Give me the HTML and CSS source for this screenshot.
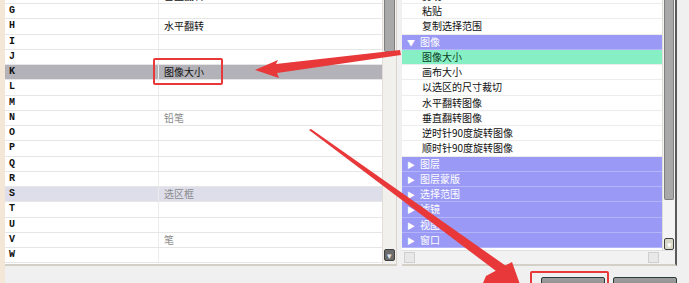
FILE: index.html
```html
<!DOCTYPE html>
<html lang="zh-CN">
<head>
  <meta charset="UTF-8" />
  <title>快捷键设置</title>
  <link rel="stylesheet" href="styles.css">
</head>
<body>
  <div class="dialog">
    <div class="panes">

      <!-- 左侧：按键列表 -->
      <div class="pane keys">
        <div class="list">
          <div class="row top"><span class="key">F</span><span class="val">垂直翻转</span></div>
          <div class="row"><span class="key">G</span><span class="val"></span></div>
          <div class="row"><span class="key">H</span><span class="val">水平翻转</span></div>
          <div class="row"><span class="key">I</span><span class="val"></span></div>
          <div class="row"><span class="key">J</span><span class="val"></span></div>
          <div class="row picked"><span class="key">K</span><span class="val">图像大小</span></div>
          <div class="row"><span class="key">L</span><span class="val"></span></div>
          <div class="row"><span class="key">M</span><span class="val"></span></div>
          <div class="row"><span class="key">N</span><span class="val dim">铅笔</span></div>
          <div class="row"><span class="key">O</span><span class="val"></span></div>
          <div class="row"><span class="key">P</span><span class="val"></span></div>
          <div class="row"><span class="key">Q</span><span class="val"></span></div>
          <div class="row"><span class="key">R</span><span class="val"></span></div>
          <div class="row soft"><span class="key">S</span><span class="val dim">选区框</span></div>
          <div class="row"><span class="key">T</span><span class="val"></span></div>
          <div class="row"><span class="key">U</span><span class="val"></span></div>
          <div class="row"><span class="key">V</span><span class="val dim">笔</span></div>
          <div class="row"><span class="key">W</span><span class="val"></span></div>
        </div>
        <div class="vscroll">
          <div class="thumb short"></div>
          <div class="spacer"></div>
          <div class="btn-down dark">▾</div>
        </div>
      </div>

      <!-- 右侧：命令树 -->
      <div class="pane tree">
        <div class="tree-body">
          <div class="list">
            <div class="item top">剪切</div>
            <div class="item">粘贴</div>
            <div class="item">复制选择范围</div>
            <div class="group"><span class="tri">▼</span>图像</div>
            <div class="item chosen">图像大小</div>
            <div class="item">画布大小</div>
            <div class="item">以选区的尺寸裁切</div>
            <div class="item">水平翻转图像</div>
            <div class="item">垂直翻转图像</div>
            <div class="item">逆时针90度旋转图像</div>
            <div class="item">顺时针90度旋转图像</div>
            <div class="group"><span class="tri">▶</span>图层</div>
            <div class="group"><span class="tri">▶</span>图层蒙版</div>
            <div class="group"><span class="tri">▶</span>选择范围</div>
            <div class="group"><span class="tri">▶</span>滤镜</div>
            <div class="group"><span class="tri">▶</span>视图</div>
            <div class="group"><span class="tri">▶</span>窗口</div>
          </div>
          <div class="vscroll">
            <div class="thumb long"></div>
            <div class="spacer"></div>
            <div class="btn-down light">▾</div>
          </div>
        </div>
        <div class="hscroll">
          <div class="hbtn"></div>
          <div class="spacer"></div>
          <div class="hbtn"></div>
        </div>
      </div>
    </div>

    <div class="actions">
      <button class="ok">确定</button>
      <button>取消</button>
    </div>

    <!-- 标注 -->
    <div class="callout callout-k"></div>
    <div class="callout callout-ok"></div>
    <svg class="marks" width="689" height="283" viewBox="0 0 689 283">
      <polygon points="400,50 276,64 278,60 255,70 279,78 277,73 401,55" fill="#e8383a"/>
      <polygon points="309,130 311,129 506,266 500,274" fill="#e8383a"/>
      <polygon points="486,276 512,262 522,290 480,290" fill="#e8383a"/>
    </svg>
  </div>
</body>
</html>
```

FILE: styles.css
```css
:root {
  --row-h: 15.25px;
  --line: #e6e6e6;
  --purple: #9a9af6;
  --green: #86f0c4;
  --red: #e8383a;
}

* {
  box-sizing: border-box;
}

body {
  margin: 0;
  background: #f0f0f0;
  font-family: "Noto Sans CJK SC", "Liberation Sans", sans-serif;
  font-size: 10px;
  color: #111;
  overflow: hidden;
}

.dialog {
  position: relative;
  width: 689px;
  height: 283px;
  overflow: hidden;
  border-left: 5px solid #f4e7d8;
}

.panes {
  display: flex;
  gap: 5px;
  height: 266px;
}

.pane {
  background: #fff;
  overflow: hidden;
  border-bottom: 2px solid #d4d0c8;
}

/* 左侧 */
.keys {
  width: 392px;
  display: flex;
  border-right: 1px solid #d8d4cc;
}

.list {
  flex: 1;
  overflow: hidden;
}

.row {
  display: flex;
  height: var(--row-h);
  border-bottom: 1px solid var(--line);
  line-height: 14px;
}

.row.top {
  margin-top: -11.25px;
}

.key {
  width: 154px;
  padding-left: 4px;
  font-family: "Liberation Mono", monospace;
  font-weight: bold;
  font-size: 10px;
  border-right: 1px solid #ececec;
}

.val {
  padding-left: 5px;
}

.val.dim {
  color: #8a8a8a;
}

.row.picked {
  background: #b2b2b8;
}

.row.soft {
  background: #dedeea;
}

.vscroll {
  width: 14px;
  display: flex;
  flex-direction: column;
  background: #f2f0ec;
  border-left: 1px solid #e0ddd6;
}

.thumb {
  margin: 0 1px;
  background: #a9a9a9;
  border: 1px solid #7e7e7e;
  border-top: none;
  border-radius: 0 0 2px 2px;
}

.thumb.short {
  height: 52px;
}

.thumb.long {
  height: 200px;
}

.spacer {
  flex: 1;
}

.btn-down {
  height: 12px;
  margin: 0 1px 3px;
  font-size: 9px;
  line-height: 11px;
  text-align: center;
  border-radius: 2px;
}

.btn-down.dark {
  background: #6c6c6c;
  border: 1px solid #404040;
  color: #e8e8e8;
}

.btn-down.light {
  background: #d8d8c8;
  border: 1px solid #404040;
  color: #fff;
  margin-bottom: 0;
}

/* 右侧 */
.tree {
  width: 275px;
  display: flex;
  flex-direction: column;
  border-right: 2px solid #5a5a5a;
}

.tree-body {
  display: flex;
  height: 250px;
}

.item,
.group {
  height: var(--row-h);
  line-height: 14px;
  border-bottom: 1px solid #ececec;
  padding-left: 20px;
  white-space: nowrap;
}

.item.top {
  margin-top: -11.25px;
}

.item.chosen {
  background: var(--green);
  color: #0c3a22;
}

.group {
  background: var(--purple);
  color: #fff;
  padding-left: 5px;
  border-bottom-color: #b4b4fa;
}

.tri {
  display: inline-block;
  width: 13px;
  font-size: 8px;
  color: #fff;
}

.tree .vscroll {
  width: 13px;
  background: #f4f4f4;
}

.hscroll {
  flex: 1;
  display: flex;
  align-items: center;
  gap: 4px;
  padding: 0 16px 0 2px;
  background: #f2f2f2;
  border-top: 1px solid #e0e0e0;
}

.hbtn {
  width: 11px;
  height: 11px;
  background: #e8e8e8;
  border: 1px solid #cfcfcf;
}

/* 按钮 */
.actions {
  display: flex;
  justify-content: flex-end;
  gap: 8px;
  padding: 11px 12px 0 0;
}

.actions button {
  width: 64px;
  height: 22px;
  font: inherit;
  color: #fff;
  background: linear-gradient(#9c9c9c, #7e7e7e);
  border: 1px solid #2c3c3c;
  border-radius: 2px;
  padding: 0;
}

/* 标注 */
.callout {
  position: absolute;
  border: 2px solid var(--red);
  border-radius: 2px;
}

.callout-k {
  left: 148px;
  top: 58px;
  width: 70px;
  height: 27px;
}

.callout-ok {
  left: 525px;
  top: 271px;
  width: 79px;
  height: 20px;
}

.marks {
  position: absolute;
  left: -5px;
  top: 0;
  pointer-events: none;
}
```
